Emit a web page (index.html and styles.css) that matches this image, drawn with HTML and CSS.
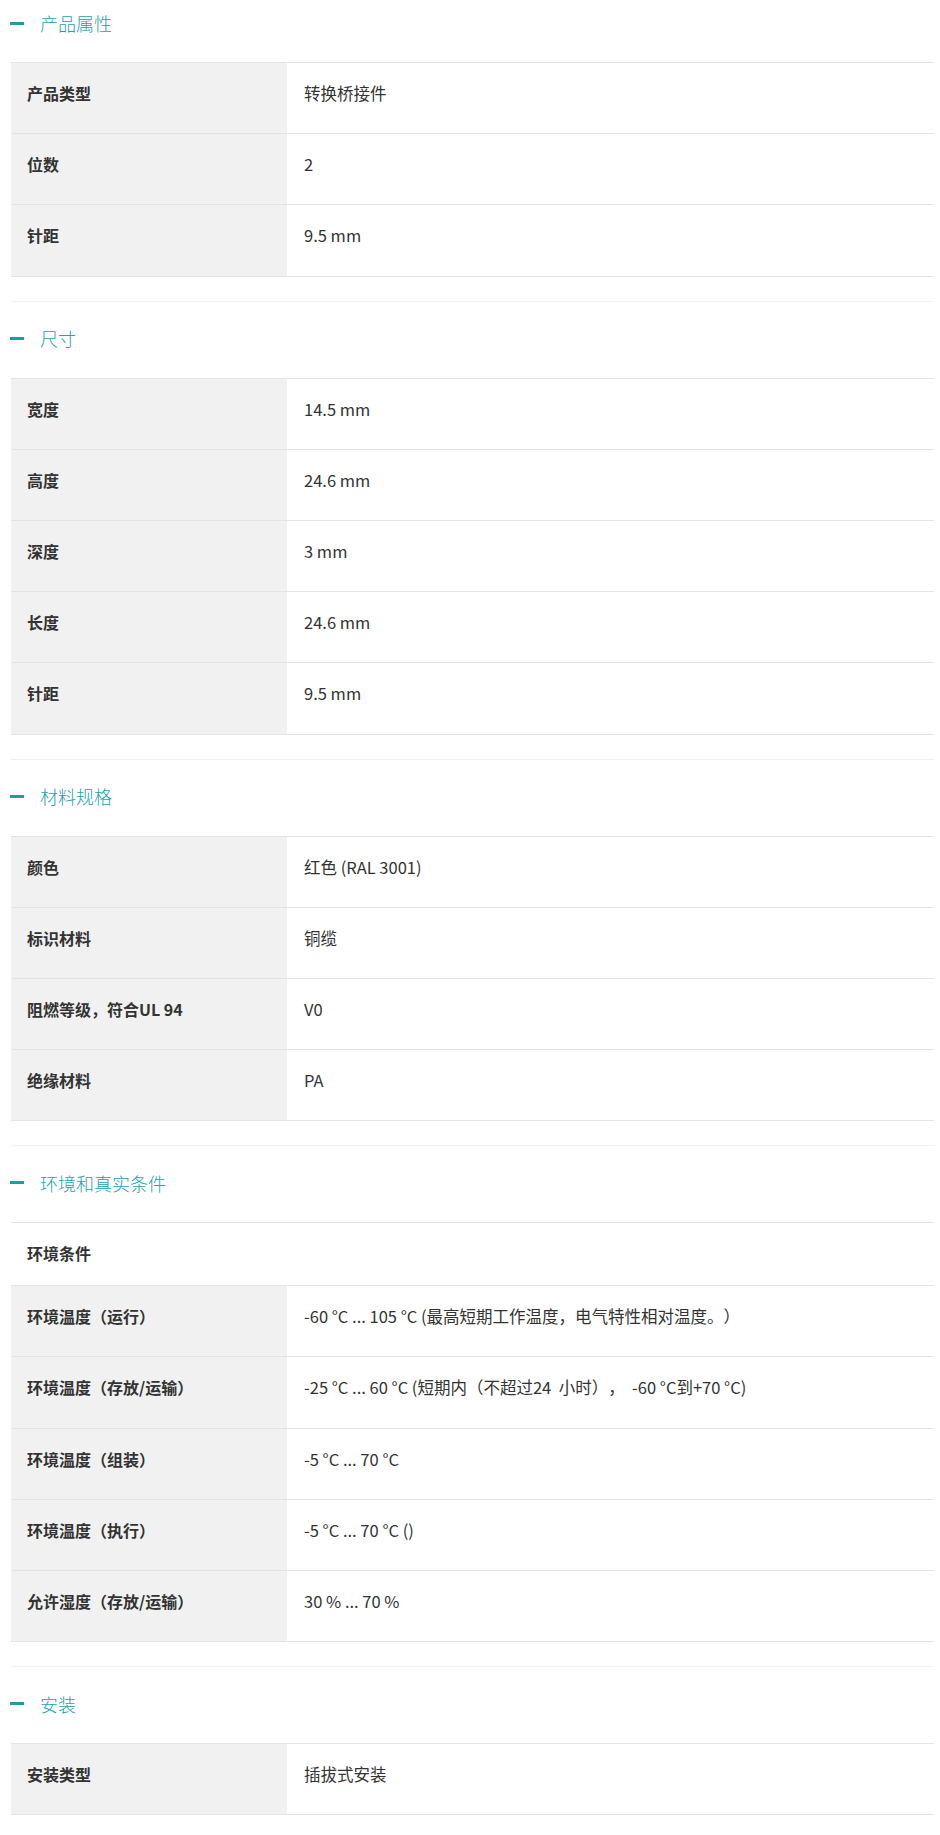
FILE: index.html
```html
<!DOCTYPE html>
<html lang="zh-CN">
<head>
<meta charset="utf-8">
<title>产品规格</title>
<link rel="stylesheet" href="styles.css">
</head>
<body>
<div class="page">
  <section class="section first">
    <div class="sec-head"><span class="dash"></span><span class="sec-title">产品属性</span></div>
    <div class="table">
      <div class="row"><div class="label">产品类型</div><div class="value">转换桥接件</div></div>
      <div class="row"><div class="label">位数</div><div class="value">2</div></div>
      <div class="row"><div class="label">针距</div><div class="value">9.5 mm</div></div>
    </div>
  </section>
  <section class="section">
    <div class="sec-head"><span class="dash"></span><span class="sec-title">尺寸</span></div>
    <div class="table">
      <div class="row"><div class="label">宽度</div><div class="value">14.5 mm</div></div>
      <div class="row"><div class="label">高度</div><div class="value">24.6 mm</div></div>
      <div class="row"><div class="label">深度</div><div class="value">3 mm</div></div>
      <div class="row"><div class="label">长度</div><div class="value">24.6 mm</div></div>
      <div class="row"><div class="label">针距</div><div class="value">9.5 mm</div></div>
    </div>
  </section>
  <section class="section">
    <div class="sec-head"><span class="dash"></span><span class="sec-title">材料规格</span></div>
    <div class="table">
      <div class="row"><div class="label">颜色</div><div class="value">红色 (RAL 3001)</div></div>
      <div class="row"><div class="label">标识材料</div><div class="value">铜缆</div></div>
      <div class="row"><div class="label">阻燃等级，符合UL 94</div><div class="value">V0</div></div>
      <div class="row"><div class="label">绝缘材料</div><div class="value">PA</div></div>
    </div>
  </section>
  <section class="section">
    <div class="sec-head"><span class="dash"></span><span class="sec-title">环境和真实条件</span></div>
    <div class="table">
      <div class="row sub"><div class="label">环境条件</div></div>
      <div class="row"><div class="label">环境温度（运行）</div><div class="value">-60 °C ... 105 °C (最高短期工作温度，电气特性相对温度。）</div></div>
      <div class="row"><div class="label">环境温度（存放/运输）</div><div class="value">-25 °C ... 60 °C (短期内（不超过24&nbsp;&nbsp;小时），&nbsp;&nbsp;-60 °C到+70 °C)</div></div>
      <div class="row"><div class="label">环境温度（组装）</div><div class="value">-5 °C ... 70 °C</div></div>
      <div class="row"><div class="label">环境温度（执行）</div><div class="value">-5 °C ... 70 °C ()</div></div>
      <div class="row"><div class="label">允许湿度（存放/运输）</div><div class="value">30 % ... 70 %</div></div>
    </div>
  </section>
  <section class="section">
    <div class="sec-head"><span class="dash"></span><span class="sec-title">安装</span></div>
    <div class="table">
      <div class="row"><div class="label">安装类型</div><div class="value">插拔式安装</div></div>
    </div>
  </section>
</div>
</body>
</html>
```
FILE: styles.css
```css
html, body {
  margin: 0;
  padding: 0;
  background: #ffffff;
}
body {
  font-family: "Noto Sans CJK SC", sans-serif;
  color: #333333;
  text-spacing-trim: space-all;
}
.page {
  padding: 0 6px 0 11px;
}
.section {
  border-top: 1px solid #f2f2f2;
  padding-bottom: 24px;
}
.section.first {
  border-top: none;
}
.sec-head {
  box-sizing: border-box;
  height: 76px;
  padding-bottom: 3px;
  display: flex;
  align-items: center;
}
.section.first .sec-head {
  height: 62px;
  padding-bottom: 16px;
}
.dash {
  display: block;
  width: 14px;
  height: 3px;
  background: #1a9ea6;
  margin-left: -1px;
  margin-right: 16px;
}
.sec-title {
  font-size: 18px;
  font-weight: 300;
  color: #1aa3b0;
  line-height: 24px;
}
.table {
  border-bottom: 1px solid #e4e4e8;
}
.row {
  display: flex;
  height: 71.2px;
  box-sizing: border-box;
  border-top: 1px solid #e4e4e8;
}
.row.sub {
  height: 63px;
}
.label {
  box-sizing: border-box;
  width: 276px;
  flex: none;
  background: #f1f1f1;
  padding: 18px 0 0 16px;
  font-weight: 700;
  font-size: 16px;
  line-height: 24px;
  color: #333333;
}
.row.sub .label {
  background: #ffffff;
}
.value {
  flex: 1;
  padding: 18px 0 0 17px;
  font-size: 16.5px;
  line-height: 24px;
  color: #333333;
}
```
